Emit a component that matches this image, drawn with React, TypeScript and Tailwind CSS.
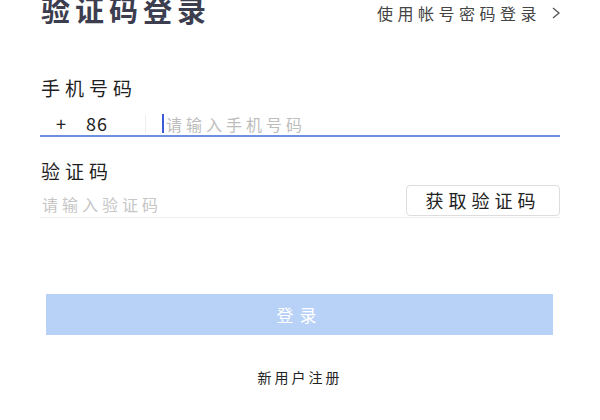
import React from "react";

const font = { fontFamily: '"Noto Sans CJK SC", "Noto Sans", sans-serif' };

export default function App() {
  return (
    <div className="w-[600px] h-[420px] overflow-hidden bg-white" style={font}>
      <div className="flex items-start justify-between pl-[41px] pr-[40px]">
        <h1 className="mt-[-9px] text-[29px] leading-[36px] font-semibold tracking-[5px] text-[#3c3d4f]">验证码登录</h1>
        <div className="mt-[3px] flex items-center text-[16px] leading-[20px] tracking-[4.5px] text-[#444]">
          <span>使用帐号密码登录</span>
          <svg className="ml-[11px]" width="8" height="12" viewBox="0 0 8 12" fill="none">
            <path d="M1 1 L7 6 L1 11" stroke="#555" strokeWidth="1.3" />
          </svg>
        </div>
      </div>

      <div className="mt-[49px] pl-[41px] text-[19px] leading-[24px] tracking-[5px] text-[#1f1f1f]">手机号码</div>

      <div className="mx-[40px] mt-[12px] flex h-[25px] items-center border-b-2 border-[#6d8fe0]">
        <span className="ml-[16px] text-[18px] text-[#222]">+</span>
        <span className="ml-[20px] text-[18px] tracking-[1px] text-[#222]">86</span>
        <span className="ml-[37px] h-[18px] w-px bg-[#eeeeee]"></span>
        <span className="ml-[16px] h-[19px] w-[2px] bg-[#3d5bd8]"></span>
        <span className="ml-[2px] text-[16px] tracking-[4px] text-[#bdbdbd]">请输入手机号码</span>
      </div>

      <div className="mt-[22px] pl-[41px] text-[19px] leading-[24px] tracking-[5px] text-[#1f1f1f]">验证码</div>

      <div className="mx-[40px] mt-[2px] flex items-center justify-between border-b border-[#eeeeee] pb-[1px]">
        <span className="ml-[2px] mt-[6px] text-[16px] tracking-[4px] text-[#c6c6c6]">请输入验证码</span>
        <button className="flex h-[31px] w-[154px] items-center justify-center rounded-[4px] border border-[#dddddd] bg-white text-[18px] tracking-[5px] text-[#222]">
          获取验证码
        </button>
      </div>

      <div className="mt-[76px] ml-[46px] flex h-[41px] w-[507px] items-center justify-center bg-[#b8d1f7] text-[17px] tracking-[6px] text-white">
        登录
      </div>

      <div className="mt-[32px] text-center text-[14px] tracking-[3px] text-[#222]">新用户注册</div>
    </div>
  );
}
